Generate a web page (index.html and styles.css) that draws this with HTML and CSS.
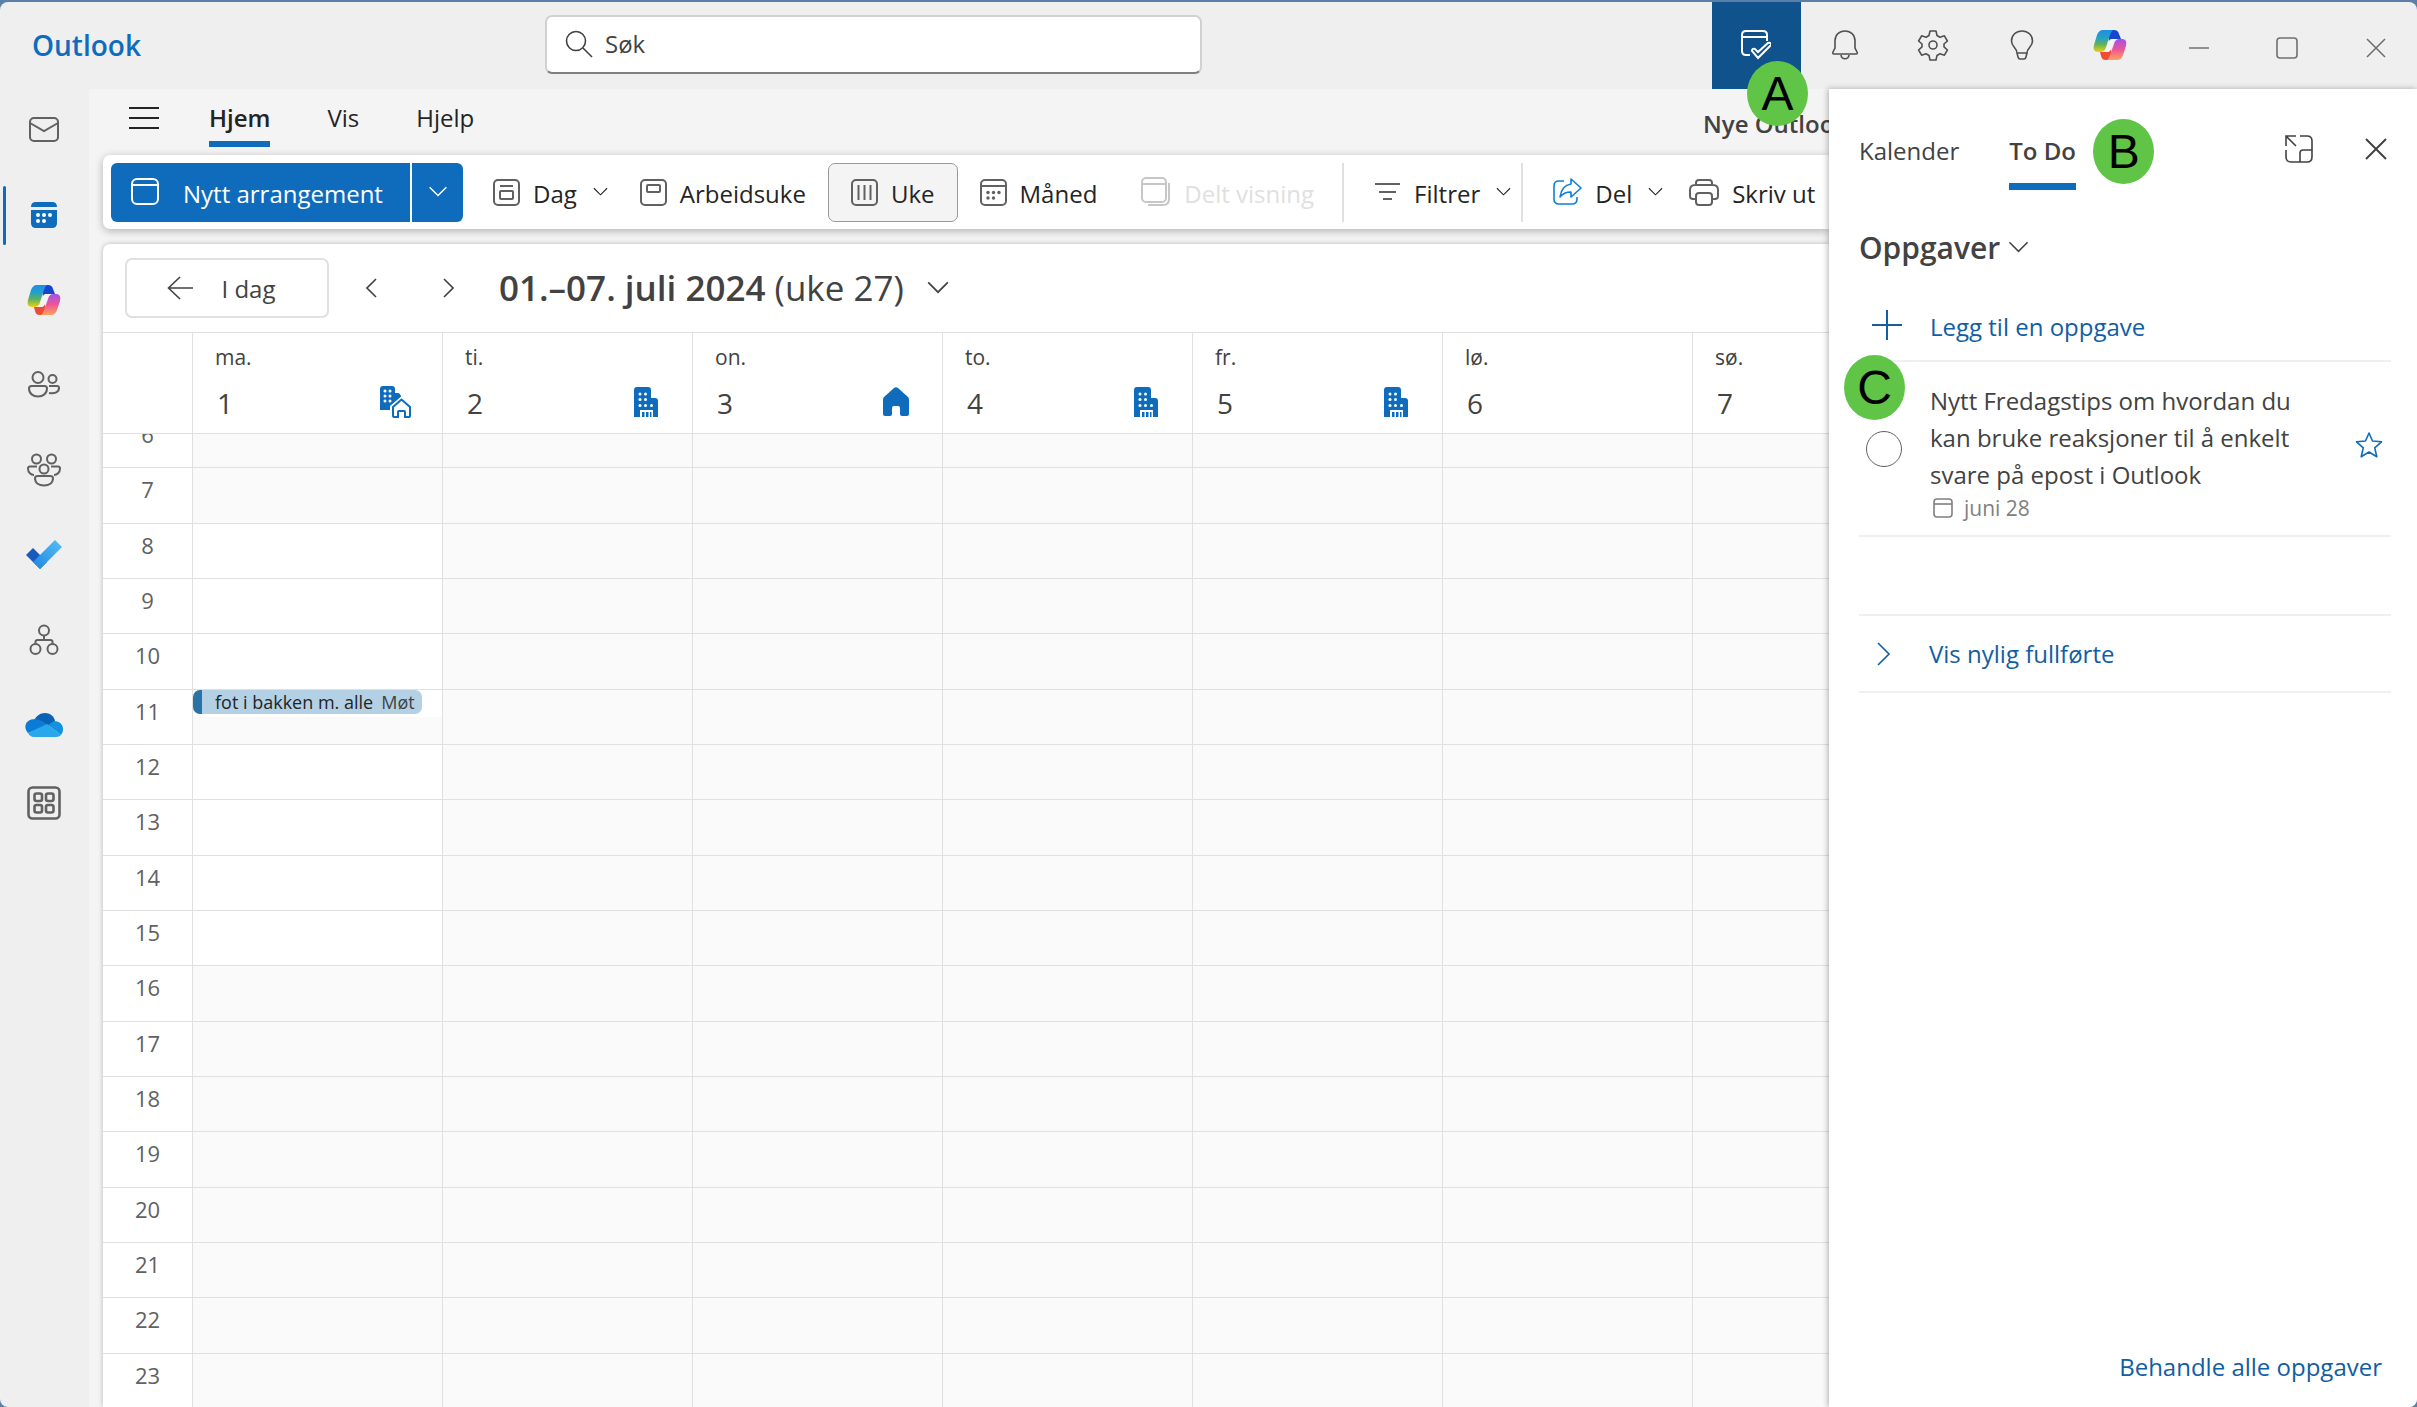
FILE: index.html
```html
<!DOCTYPE html>
<html lang="no">
<head>
<meta charset="utf-8">
<title>Outlook</title>
<link rel="stylesheet" href="styles.css">
</head>
<body>
<svg class="defs" aria-hidden="true">
  <defs>
    <linearGradient id="cool" x1="0" y1="0" x2="0" y2="1"><stop offset="0" stop-color="#1c8fe8"/><stop offset=".35" stop-color="#23a0c8"/><stop offset=".65" stop-color="#5fb35a"/><stop offset="1" stop-color="#f2cf10"/></linearGradient>
    <linearGradient id="warm" x1="0" y1="0" x2="0" y2="1"><stop offset="0" stop-color="#a352e8"/><stop offset=".5" stop-color="#ee5596"/><stop offset="1" stop-color="#fba35e"/></linearGradient>
    <linearGradient id="check" x1="0" y1="1" x2="1" y2="0"><stop offset="0" stop-color="#1f86e0"/><stop offset="1" stop-color="#56bef8"/></linearGradient>
    <symbol id="copilot" viewBox="0 0 34 32">
      <path d="M15 1h6c3 0 4 1 5 4l2 5h-8c-2 0-3 1-4 3z" fill="#1745cf"/>
      <path d="M19 31h-6c-3 0-4-1-5-4l-1-4h7c2 0 3-1 4-3z" fill="#ee4d35"/>
      <path d="M10 1h11c-2 0-3 2-4 5l-4 12c-1 4-3 5-6 5H5c-4 0-5-3-4-7L4 6c1-3 3-5 6-5z" fill="url(#cool)"/>
      <path d="M24 31H13c2 0 3-2 4-5l4-11c1-4 3-5 6-5h2c4 0 5 3 4 7l-3 9c-1 3-3 5-6 5z" fill="url(#warm)"/>
      <path d="M19 10h5c-2 1-3 2-4 5l-2 5c-1 2-2 3-4 3h-4c2-1 3-2 4-5l2-5c0-2 1-3 3-3z" fill="#f4f4f4"/>
    </symbol>
    <symbol id="chev" viewBox="0 0 16 10"><path d="M1 1l7 7 7-7" fill="none" stroke="currentColor" stroke-width="1.200"/></symbol>
    <symbol id="building" viewBox="0 0 24 30">
      <path d="M0 3q0-3 3-3h11q3 0 3 3v8h4q3 0 3 3v16h-5v-7H6v7H0z" fill="currentColor"/>
      <path d="M8 25h2.500v5H8zM12 25h2.500v5H12zM16 25h1.500v5H16z" fill="currentColor"/>
      <g fill="#fff"><circle cx="6" cy="7" r="1.500"/><circle cx="11.500" cy="7" r="1.500"/><circle cx="6" cy="12.500" r="1.500"/><circle cx="11.500" cy="12.500" r="1.500"/><circle cx="6" cy="18.500" r="1.500"/><circle cx="11.500" cy="18.500" r="1.500"/><circle cx="17.500" cy="18.500" r="1.500"/></g>
    </symbol>
  </defs>
</svg>

<div class="window">
  <header class="topbar">
    <span class="brand">Outlook</span>
    <label class="search">
      <svg width="28" height="28" viewBox="0 0 28 28" class="line"><circle cx="11" cy="11" r="9.500"/><path d="M18 18l9 9"/></svg>
      <input type="text" placeholder="Søk" aria-label="Søk">
    </label>
    <div class="actions">
      <button class="active" aria-label="Min dag"><svg width="30" height="32" viewBox="0 0 30 32" class="line"><path d="M26 12V6q0-4-4-4H5Q1 2 1 6v16q0 4 4 4h4M1 8h25"/><path d="M14 20q-3-1-3 2l6 7 13-13q0-3-3-2l-10 9z"/></svg>
        <span class="badge badge-a">A</span></button>
      <button aria-label="Varsler"><svg width="28" height="30" viewBox="0 0 28 30" class="line"><path d="M14 1c-6 0-10 4-10 10v7l-2 4q-1 2 1 2h22q2 0 1-2l-2-4v-7c0-6-4-10-10-10zM10 25c.5 5 7.500 5 8 0"/></svg></button>
      <button aria-label="Innstillinger"><svg width="32" height="32" viewBox="0 0 32 32" class="line"><circle cx="16" cy="16" r="4"/><path d="M13 2h6l1 4.500 3 1.700 4.400-1.400 3 5.200-3.400 3v2.800l3.400 3.200-3 5.200-4.400-1.400-3 1.700-1 4.500h-6l-1-4.500-3-1.700-4.400 1.400-3-5.200L5 17.800V15l-3.400-3 3-5.200L9 8.200l3-1.700z" stroke-linejoin="round"/></svg></button>
      <button aria-label="Tips"><svg width="24" height="30" viewBox="0 0 24 30" class="line"><path d="M7 23c0-5-5.500-6-5.500-12C1.500 5 6 1 12 1s10.500 4 10.500 10c0 6-5.500 7-5.500 12zM7 23l1 4q.5 2 2 2h4q1.500 0 2-2l1-4"/></svg></button>
      <button aria-label="Copilot"><svg width="34" height="32"><use href="#copilot"/></svg></button>
      <button aria-label="Minimer" class="sys"><svg width="22" height="22" viewBox="0 0 22 22" class="line"><path d="M1 11h20"/></svg></button>
      <button aria-label="Maksimer" class="sys"><svg width="22" height="22" viewBox="0 0 22 22" class="line"><rect x="1" y="1" width="20" height="20" rx="3"/></svg></button>
      <button aria-label="Lukk" class="sys"><svg width="20" height="20" viewBox="0 0 20 20" class="line"><path d="M1 1l18 18M19 1L1 19"/></svg></button>
    </div>
  </header>

  <nav class="rail" aria-label="Apper">
    <button aria-label="E-post"><svg width="32" height="26" viewBox="0 0 32 26" class="line"><rect x="2" y="1" width="28" height="23" rx="4"/><path d="M2 6l14 8 14-8"/></svg></button>
    <button aria-label="Kalender" class="current"><svg width="28" height="28" viewBox="0 0 28 28"><path d="M1 6q0-5 5-5h16q5 0 5 5zM1 9h26v13q0 5-5 5H6q-5 0-5-5z" fill="#0f6cbd"/><g fill="#fff"><circle cx="8" cy="14" r="2"/><circle cx="14" cy="14" r="2"/><circle cx="20" cy="14" r="2"/><circle cx="8" cy="20" r="2"/><circle cx="14" cy="20" r="2"/></g></svg></button>
    <button aria-label="Copilot"><svg width="34" height="32"><use href="#copilot"/></svg></button>
    <button aria-label="Personer"><svg width="32" height="27" viewBox="0 0 32 27" class="line"><circle cx="10" cy="6.500" r="5.500"/><circle cx="24.500" cy="8" r="4"/><path d="M3.500 15h13q2.500 0 2.500 2.500c0 5-4 8-9 8s-9-3-9-8Q1 15 3.500 15zM21 15h8q2 0 2 2c0 4-4 6-10 5"/></svg></button>
    <button aria-label="Grupper"><svg width="34" height="34" viewBox="0 0 34 34" class="line"><circle cx="9.500" cy="6" r="4.500"/><circle cx="24.500" cy="6" r="4.500"/><circle cx="17" cy="16" r="4.500"/><path d="M11 23h12q3 0 3 2c0 5-4 7.500-9 7.500S8 30 8 25q0-2 3-2zM10 13.500H3q-2 0-2 2c0 4 3 6.500 6 6.500M24 13.500h7q2 0 2 2c0 4-3 6.500-6 6.500"/></svg></button>
    <button aria-label="To Do"><svg width="36" height="30" viewBox="0 0 36 30"><path d="M0 15l7-7 14 14-7 7z" fill="#195abd"/><path d="M7 22L29 0l7 7-22 22z" fill="url(#check)"/></svg></button>
    <button aria-label="Organisasjon"><svg width="30" height="32" viewBox="0 0 30 32" class="line"><circle cx="15" cy="6.500" r="5"/><circle cx="6.500" cy="25" r="5"/><circle cx="23.500" cy="25" r="5"/><path d="M15 12v4M6.500 20v-2q0-2 2-2h13q2 0 2 2v2"/></svg></button>
    <button aria-label="OneDrive"><svg width="38" height="24" viewBox="0 0 38 24"><path d="M8 9C11 3 15 0 20 0c5 0 9 3 10 8l-7 5z" fill="#0a62b4"/><path d="M10 6c4 0 7 2 13 6L3 20C-3 13 2 6 10 6z" fill="#0a7bd6"/><path d="M29 8c6 0 9 4 9 8 0 3-1 4-2 6l-13-10z" fill="#1590df"/><path d="M22 11l14 11c-1 1-3 2-5 2H9c-3 0-5-2-6-4z" fill="#28a8ea"/></svg></button>
    <button aria-label="Flere apper" class="more"><svg width="34" height="34" viewBox="0 0 34 34" class="line bold"><rect x="1.500" y="1.500" width="31" height="31" rx="4"/><rect x="7.500" y="7.500" width="7.500" height="7.500" rx="2"/><rect x="19" y="7.500" width="7.500" height="7.500" rx="2"/><rect x="7.500" y="19" width="7.500" height="7.500" rx="2"/><rect x="19" y="19" width="7.500" height="7.500" rx="2"/></svg></button>
  </nav>

  <main class="main">
    <div class="tabs">
      <button class="menu" aria-label="Meny"><svg width="32" height="24" viewBox="0 0 32 24" class="line thick"><path d="M1 2h30M1 12h30M1 22h30"/></svg></button>
      <button class="tab selected">Hjem</button>
      <button class="tab">Vis</button>
      <button class="tab">Hjelp</button>
      <span class="new-outlook">Nye Outlook</span>
    </div>

    <div class="toolbar">
      <button class="primary"><svg width="28" height="28" viewBox="0 0 28 28" class="line thick"><rect x="1" y="1" width="26" height="25" rx="5"/><path d="M1 7h26"/></svg><span>Nytt arrangement</span></button>
      <button class="primary split" aria-label="Flere valg"><svg width="20" height="12"><use href="#chev"/></svg></button>
      <button class="tool first drop"><svg width="27" height="27" viewBox="0 0 27 27" class="line"><rect x="1" y="1" width="25" height="25" rx="4"/><path d="M7 7h13"/><rect x="7" y="12" width="13" height="8" rx="1"/></svg><span>Dag</span><svg class="chev" width="15" height="10"><use href="#chev"/></svg></button>
      <button class="tool"><svg width="27" height="27" viewBox="0 0 27 27" class="line"><rect x="1" y="1" width="25" height="25" rx="4"/><rect x="7" y="6" width="13" height="7" rx="1"/></svg><span>Arbeidsuke</span></button>
      <button class="tool pressed"><svg width="27" height="27" viewBox="0 0 27 27" class="line"><rect x="1" y="1" width="25" height="25" rx="4"/><path d="M7.500 6v15M13.500 6v15M19.500 6v15"/></svg><span>Uke</span></button>
      <button class="tool"><svg width="27" height="27" viewBox="0 0 27 27" class="line"><rect x="1" y="1" width="25" height="25" rx="4"/><path d="M1 7h25"/><g fill="currentColor" stroke="none"><circle cx="8" cy="13.500" r="1.700"/><circle cx="13.500" cy="13.500" r="1.700"/><circle cx="19" cy="13.500" r="1.700"/><circle cx="8" cy="19" r="1.700"/><circle cx="13.500" cy="19" r="1.700"/></g></svg><span>Måned</span></button>
      <button class="tool" disabled><svg width="30" height="30" viewBox="0 0 30 30" class="line"><rect x="1" y="1" width="24" height="24" rx="4"/><path d="M1 7h24M28 6v16q0 6-6 6H7"/></svg><span>Delt visning</span></button>
      <span class="sep"></span>
      <button class="tool drop"><svg width="27" height="27" viewBox="0 0 27 27" class="line thick"><path d="M1 5h25M5 13h17M9 20h9"/></svg><span>Filtrer</span><svg class="chev" width="15" height="10"><use href="#chev"/></svg></button>
      <span class="sep"></span>
      <button class="tool drop"><svg width="29" height="28" viewBox="0 0 29 28" class="line blue"><path d="M11 3H6Q1 3 1 8v13q0 5 5 5h13q5 0 5-5v-2"/><path d="M18 1l10 9-10 9v-5c-5 0-8 1-11 5 1-8 4-12 11-13z" stroke-linejoin="round"/></svg><span>Del</span><svg class="chev" width="15" height="10"><use href="#chev"/></svg></button>
      <button class="tool"><svg width="30" height="27" viewBox="0 0 30 27" class="line"><path d="M6 20H4q-3 0-3-3v-6q0-5 5-5h18q5 0 5 5v6q0 3-3 3h-2M7 6V4q0-3 3-3h10q3 0 3 3v2"/><rect x="7" y="14" width="16" height="12" rx="3"/></svg><span>Skriv ut</span></button>
    </div>

    <section class="calendar">
      <div class="range">
        <button class="today"><svg width="27" height="24" viewBox="0 0 27 24" class="line"><path d="M26 12H1M13 1L1.500 12 13 23"/></svg><span>I dag</span></button>
        <button class="step" aria-label="Forrige uke"><svg width="12" height="20" viewBox="0 0 12 20" class="line"><path d="M10 1L1 10l9 9"/></svg></button>
        <button class="step" aria-label="Neste uke"><svg width="12" height="20" viewBox="0 0 12 20" class="line"><path d="M2 1l9 9-9 9"/></svg></button>
        <button class="period"><b>01.–07. juli 2024</b> (uke 27)<svg width="24" height="14"><use href="#chev"/></svg></button>
      </div>
      <div class="days">
        <div class="day corner"></div>
        <div class="day"><span>ma.</span><strong>1</strong><svg width="31" height="32" viewBox="0 0 31 32"><path d="M0 3q0-3 3-3h9q3 0 3 3v4h3q2 0 3 3v1L10 20v4H0z" fill="currentColor"/><g fill="#fff"><circle cx="5" cy="5" r="1.500"/><circle cx="10" cy="5" r="1.500"/><circle cx="5" cy="10" r="1.500"/><circle cx="10" cy="10" r="1.500"/><circle cx="5" cy="15" r="1.500"/><circle cx="10" cy="15" r="1.500"/></g><path d="M13 21l8.500-7.500L30 21v10h-6v-6h-5v6h-6z" fill="#fff" stroke="#fff" stroke-width="5"/><path d="M13 21l8.500-7.500L30 21v9q0 1-1 1h-4v-5q0-1-1-1h-5q-1 0-1 1v5h-4q-1 0-1-1z" fill="#fff" stroke="currentColor" stroke-width="2"/></svg></div>
        <div class="day"><span>ti.</span><strong>2</strong><svg width="24" height="30"><use href="#building"/></svg></div>
        <div class="day"><span>on.</span><strong>3</strong><svg width="26" height="30" viewBox="0 0 26 30"><path d="M0 13q0-2 1-3L11 1q2-1.500 4 0l10 9q1 1 1 3v14q0 2-2 2h-5q-2 0-2-2v-6q0-2-2-2h-4q-2 0-2 2v6q0 2-2 2H2q-2 0-2-2z" fill="currentColor"/></svg></div>
        <div class="day"><span>to.</span><strong>4</strong><svg width="24" height="30"><use href="#building"/></svg></div>
        <div class="day"><span>fr.</span><strong>5</strong><svg width="24" height="30"><use href="#building"/></svg></div>
        <div class="day"><span>lø.</span><strong>6</strong></div>
        <div class="day"><span>sø.</span><strong>7</strong></div>
      </div>
      <div class="viewport">
        <div class="hours" id="hours"></div>
      </div>
    </section>
  </main>

  <aside class="panel">
    <div class="panel-head">
      <button class="ptab">Kalender</button>
      <button class="ptab selected">To Do<span class="badge badge-b">B</span></button>
      <button class="pop" aria-label="Åpne i nytt vindu"><svg width="28" height="28" viewBox="0 0 28 28" class="line"><path d="M1 11V1h10M1 1l10 10M15 1h7q5 0 5 5v16q0 5-5 5H6q-5 0-5-5v-7M27 15H18q-3 0-3 3v9"/></svg></button>
      <button aria-label="Lukk panel"><svg width="22" height="22" viewBox="0 0 22 22" class="line thick"><path d="M1 1l20 20M21 1L1 21"/></svg></button>
    </div>
    <button class="list-name">Oppgaver<svg width="21" height="13"><use href="#chev"/></svg></button>
    <button class="row add"><svg width="32" height="32" viewBox="0 0 32 32" class="line thick"><path d="M16 1v30M1 16h30"/></svg><span>Legg til en oppgave</span></button>
    <div class="task">
      <span class="badge badge-c">C</span>
      <input type="checkbox" id="task1">
      <div class="task-text">
        <label for="task1">Nytt Fredagstips om hvordan du kan bruke reaksjoner til å enkelt svare på epost i Outlook</label>
        <div class="due"><svg width="20" height="20" viewBox="0 0 20 20" class="line"><rect x="1" y="1" width="18" height="18" rx="3"/><path d="M1 6h18"/></svg>juni 28</div>
      </div>
      <button class="star" aria-label="Merk som viktig"><svg width="28" height="28" viewBox="0 0 28 28" class="line"><path d="M14 2l3.500 8 9 .8-6.800 6 2.100 9L14 21l-7.800 4.800 2.100-9-6.800-6 9-.8z" stroke-linejoin="round"/></svg></button>
    </div>
    <button class="row done"><svg width="14" height="24" viewBox="0 0 14 24" class="line"><path d="M1 1l11 11L1 23"/></svg>Vis nylig fullførte</button>
    <a class="manage" href="#">Behandle alle oppgaver</a>
  </aside>
</div>
<script src="hours.js"></script>
</body>
</html>
```
FILE: styles.css
```css
* { box-sizing: border-box; }
body {
  margin: 0;
  background: #5c7fa8;
  color: #424242;
  font: 24px/32px "Open Sans", "Noto Sans", sans-serif;
}
button, input { font: inherit; color: inherit; }
button { border: 0; padding: 0; background: none; display: flex; align-items: center; white-space: nowrap; }
svg { flex: none; display: block; }
.defs { position: absolute; width: 0; height: 0; }
.line { fill: none; stroke: currentColor; stroke-width: 1.6; }
.thick { stroke-width: 2; }
.bold { stroke-width: 2.6; }
.blue { color: #0f7fd8; }

.window {
  height: calc(100vh - 2px);
  margin-top: 2px;
  display: grid;
  grid-template: 87px minmax(0, 1fr) / 89px minmax(0, 1fr) 588px;
  background: #efefef;
  border-radius: 8px;
  overflow: hidden;
}

/* Top bar */
.topbar { grid-column: 1 / -1; display: flex; position: relative; z-index: 3; }
.brand { width: 545px; padding: 0 0 2px 32px; align-self: center; font-size: 28px; font-weight: 600; color: #0f6cbd; }
.search {
  display: flex; align-items: center; gap: 12px;
  width: 657px; height: 59px; margin-top: 13px; padding: 0 0 2px 18px;
  background: #fff; border: 2px solid #d1d1d1; border-bottom-color: #808080; border-radius: 7px;
}
.search input { border: 0; outline: 0; padding: 0; width: 80%; background: none; }
.search input::placeholder { color: #424242; opacity: 1; }
.actions { margin: 0 -3px 0 auto; width: 708px; display: grid; grid-template-columns: repeat(8, 1fr); }
.actions button { justify-content: center; position: relative; color: #505050; padding-bottom: 2px; }
.actions .sys { padding: 5px 0 0; color: #707070; }
.actions .active { background: #10538c; color: #fff; }
.active .line { stroke-width: 2; }

/* Lettered callouts */
.badge {
  position: absolute; width: 61px; height: 65px; border-radius: 50%;
  background: #60c446; color: #000; text-align: center;
  font: 48px/65px "Liberation Sans", sans-serif;
}
.badge-a { left: 35px; top: 59px; }
.badge-b { left: 84px; top: 14px; }
.badge-c { left: -15px; top: -7px; }

/* App rail */
.rail { display: flex; flex-direction: column; margin-top: -2px; color: #616161; }
.rail .line:not(.bold) { stroke-width: 2; }
.rail button { height: 85px; justify-content: center; width: 87px; }
.rail .more { height: 72px; }
.rail .current { position: relative; }
.rail .current::before { content: ""; position: absolute; left: 3px; top: 14px; width: 3px; height: 59px; border-radius: 2px; background: #0f6cbd; }

/* Ribbon */
.main { background: #f4f4f4; display: flex; flex-direction: column; min-width: 0; overflow: hidden; padding-left: 14px; }
.tabs { height: 66px; display: flex; flex: none; color: #242424; }
.menu { width: 34px; margin: -8px 47px 0 25px; }
.tab { height: 58px; margin-right: 57px; border-bottom: 6px solid transparent; border-top: 6px solid transparent; }
.tab.selected { font-weight: 600; border-bottom-color: #0f6cbd; border-image: linear-gradient(transparent 50%, #0f6cbd 50%) 6; }
.new-outlook { margin-left: auto; width: 126px; padding-top: 19px; overflow: hidden; white-space: nowrap; font-weight: 600; color: #424242; }
.toolbar {
  height: 74px; flex: none; display: flex; align-items: center; padding-left: 8px; color: #242424;
  background: #fff; border-radius: 7px 0 0 7px; box-shadow: 0 2px 8px rgba(0, 0, 0, .28);
}
.toolbar button { height: 59px; flex: none; }
.toolbar span, .today span { padding-top: 3px; }
.primary { width: 299px; gap: 24px; padding-left: 20px; background: #0f6cbd; color: #fff; border-radius: 6px 0 0 6px; }
.primary.split { width: 51px; margin-left: 2px; padding: 0; justify-content: center; border-radius: 0 6px 6px 0; }
.tool { gap: 13px; padding: 0 22px; }
.tool > .line:not(.blue) { color: #616161; stroke-width: 2; }
.tool .chev { margin-left: 3px; }
.tool.first { margin-left: 8px; }
.tool.drop { padding-right: 10px; }
.sep ~ .tool.drop { padding-right: 4px; }
.tool.pressed { background: #f4f4f4; border: 1px solid #9a9a9a; border-radius: 7px; }
.tool:disabled { color: #e0e0e0; }
.tool:disabled > .line:not(.blue) { color: #c7c7c7; }
.toolbar .sep { flex: none; width: 2px; height: 59px; margin: 0 8px 0 6px; padding: 0; background: #e0e0e0; }

/* Calendar */
.calendar {
  flex: 1; min-height: 0; margin-top: 15px; display: flex; flex-direction: column;
  background: #fff; border-radius: 7px 0 0 0; box-shadow: 0 0 5px rgba(0, 0, 0, .25);
}
.range { height: 88px; flex: none; display: flex; align-items: center; padding: 0 0 1px 22px; }
.today { width: 204px; height: 60px; gap: 28px; padding-right: 12px; justify-content: center; border: 2px solid #e0e0e0; border-radius: 7px; }
.step { width: 76px; justify-content: center; }
.today + .step { margin-left: 5px; }
.period { margin-left: 13px; font-size: 35px; line-height: 44px; white-space: pre; }
.period b { font-weight: 600; }
.period svg { margin-left: 22px; }
.days, .hours { display: grid; grid-template-columns: 89px repeat(7, minmax(250px, 1fr)); }
.days { flex: none; height: 102px; border-top: 1px solid #e0e0e0; border-bottom: 1px solid #e0e0e0; }
.day { border-left: 1px solid #e0e0e0; display: grid; grid-template: 48px 52px / 1fr 31px; padding: 0 31px 0 22px; align-items: center; }
.day span { grid-column: 1 / -1; font-size: 21px; }
.day strong { font-weight: 400; font-size: 28px; padding-bottom: 8px; padding-left: 2px; }
.day svg { color: #0f6cbd; margin-bottom: 10px; justify-self: center; }
.corner, .hour { border-left: 0; }
.viewport { flex: 1; min-height: 0; overflow: hidden; }
.hours { height: calc(100% + 23px); margin-top: -21px; grid-auto-rows: 1fr; }
.hour, .slot { border-bottom: 1px solid #e0e0e0; min-height: 0; }
.hour { text-align: center; font-size: 22px; padding-top: 5px; color: #616161; }
.slot { border-left: 1px solid #e0e0e0; background: #fafafa; }
.slot.work { background: #fff; }
.slot.half { background: linear-gradient(#fff 50%, #fafafa 50%); }
.event {
  width: 229px; height: 24px; padding-left: 13px; overflow: hidden; white-space: nowrap;
  font-size: 18px; line-height: 25px; background: #b3d0e5; border-left: 9px solid #2a73a5; border-radius: 7px;
}
.event b { font-weight: 500; color: #242424; margin-right: 8px; }

/* To Do panel */
.panel {
  position: relative; z-index: 2; background: #fff; padding: 0 26px 24px 30px;
  display: flex; flex-direction: column; box-shadow: -1px 0 6px rgba(0, 0, 0, .3);
}
.panel-head { height: 101px; flex: none; display: flex; align-items: flex-start; padding-top: 16px; }
.panel-head > button { height: 88px; }
.panel-head > .ptab { height: 85px; margin-right: 50px; padding-top: 13px; position: relative; border-bottom: 7px solid transparent; }
.panel-head > .ptab.selected { font-weight: 600; border-bottom-color: #0f6cbd; }
.panel-head > .pop { margin-left: auto; margin-right: 52px; }
.panel-head > button:last-child { margin-right: 4px; }
.list-name { height: 115px; font-size: 30px; font-weight: 600; gap: 8px; }
.row { color: #115ea3; border-bottom: 2px solid #f0f0f0; }
.add { height: 57px; gap: 27px; padding: 0 0 16px 12px; }
.add span { padding-top: 5px; }
.task { position: relative; display: flex; height: 175px; padding-top: 20px; border-bottom: 2px solid #f0f0f0; }
.task input { appearance: none; flex: none; width: 36px; height: 36px; margin: 49px 28px 0 7px; border: 1px solid #616161; border-radius: 50%; background: #fff; }
.task label { display: block; width: 380px; line-height: 37px; }
.due { display: flex; align-items: center; gap: 11px; padding-left: 3px; font-size: 21px; line-height: 30px; color: #808080; }
.star { margin-left: auto; margin-right: 8px; align-self: flex-start; margin-top: 49px; color: #0f6cbd; }
.done { height: 79px; margin-top: 77px; gap: 38px; padding-left: 18px; border-top: 2px solid #f0f0f0; }
.manage { margin: auto 9px 0 auto; color: #115ea3; text-decoration: none; }
```
FILE: hours.js
```js
const grid = document.getElementById("hours");
for (let hour = 6; hour <= 23; hour++) {
  const label = document.createElement("div");
  label.className = "hour";
  label.textContent = hour;
  grid.append(label);
  for (let day = 0; day < 7; day++) {
    const slot = document.createElement("div");
    slot.className = "slot";
    if (day === 0 && hour >= 8 && hour < 16) {
      slot.classList.add(hour === 11 ? "half" : "work");
    }
    if (day === 0 && hour === 11) {
      slot.innerHTML = '<div class="event"><b>fot i bakken m. alle</b>Møt</div>';
    }
    grid.append(slot);
  }
}
```
